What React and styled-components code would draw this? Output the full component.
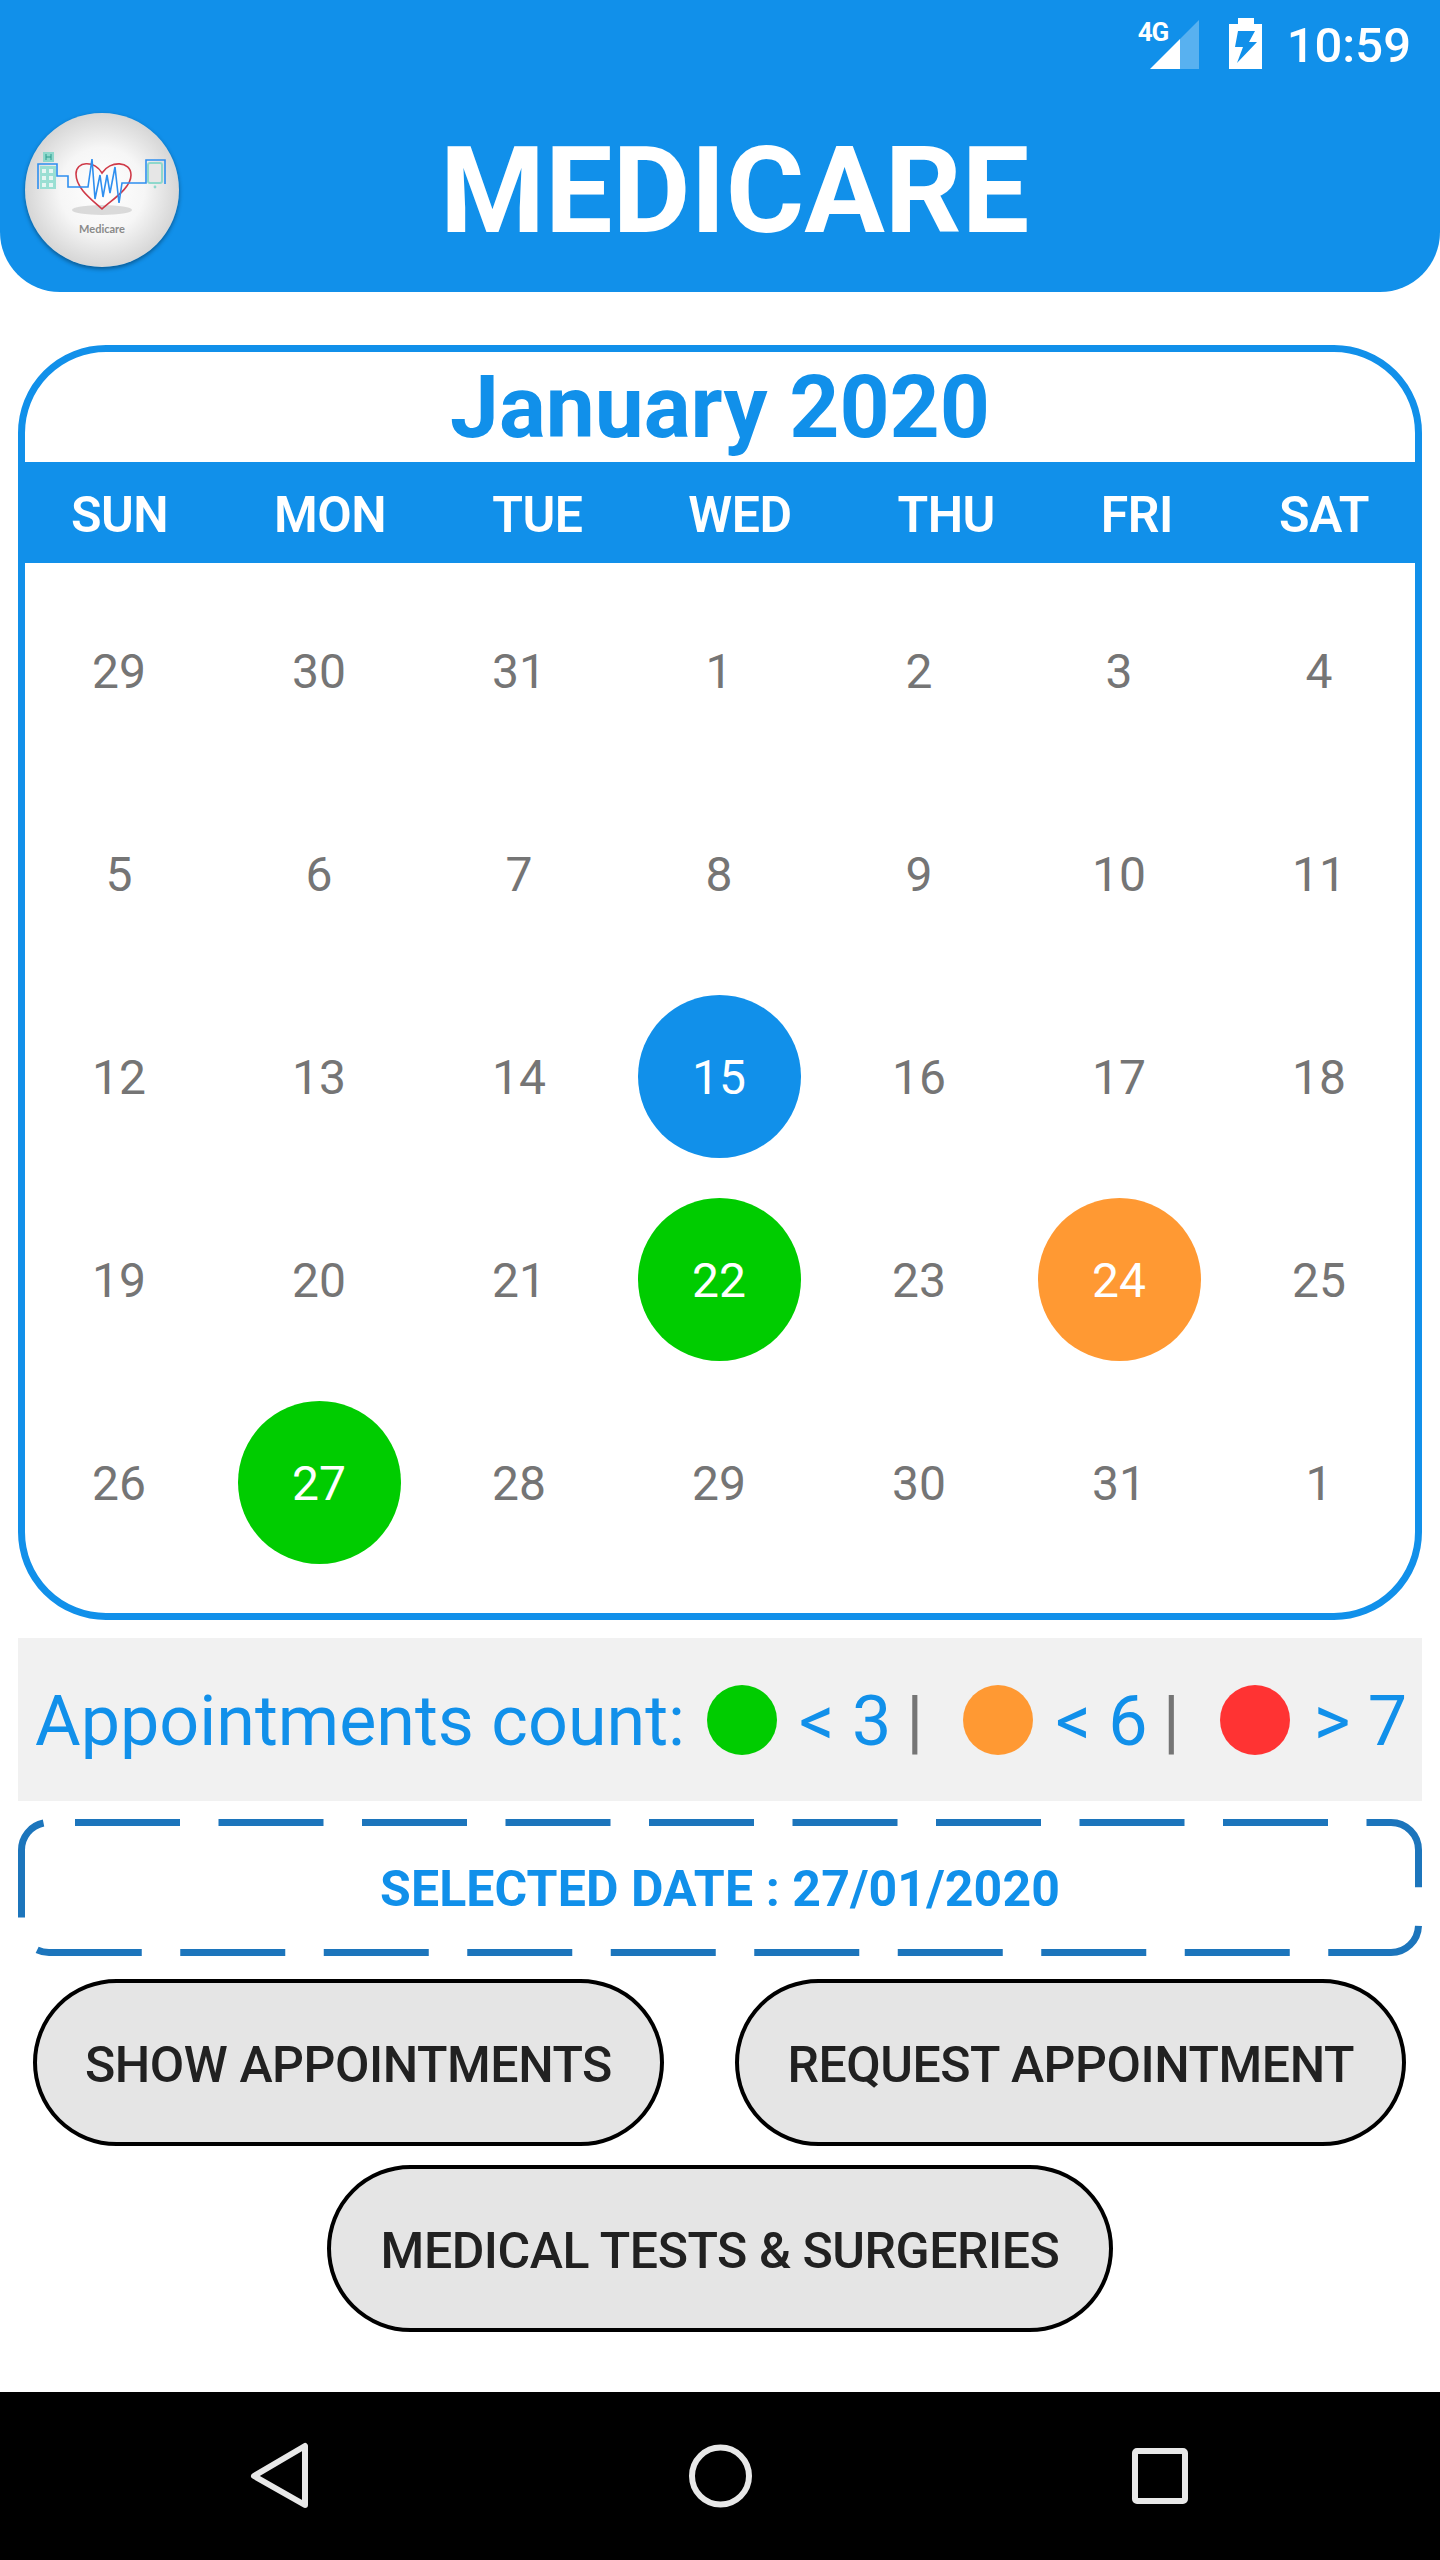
import React from 'react'
import styled, { createGlobalStyle } from 'styled-components'

const weekdays = ['SUN', 'MON', 'TUE', 'WED', 'THU', 'FRI', 'SAT']

const days = [
  29, 30, 31, 1, 2, 3, 4,
  5, 6, 7, 8, 9, 10, 11,
  12, 13, 14, { n: 15, mark: '#1190ea' }, 16, 17, 18,
  19, 20, 21, { n: 22, mark: '#00cc00' }, 23, { n: 24, mark: '#ff9933' }, 25,
  26, { n: 27, mark: '#00cc00' }, 28, 29, 30, 31, 1,
]

const Logo = () => (
  <LogoBadge>
    <svg width="154" height="154" viewBox="0 0 154 154">
      <defs>
        <radialGradient id="ball" cx="50%" cy="50%" r="50%">
          <stop offset="0%" stopColor="#ffffff" />
          <stop offset="55%" stopColor="#f6f6f6" />
          <stop offset="100%" stopColor="#d6d6d6" />
        </radialGradient>
      </defs>
      <circle cx="77" cy="77" r="77" fill="url(#ball)" />
      <ellipse cx="77" cy="97" rx="30" ry="5" fill="#c4c4c4" opacity="0.6" />
      <rect x="18" y="39" width="11" height="10" fill="#8fd8cc" />
      <path d="M21 41v6M26 41v6M21 44h5" stroke="#2a9c8c" strokeWidth="1" fill="none" />
      <rect x="15" y="53" width="16" height="23" fill="#9adfd3" />
      <path d="M17 56h4v4h-4zM24 56h4v4h-4zM17 63h4v4h-4zM24 63h4v4h-4zM17 70h4v4h-4zM24 70h4v4h-4z" fill="#e6f6f3" />
      <path
        d="M77 96C66 86 51 75 51 61C51 48 69 47 77 60C85 47 106 48 106 62C106 75 88 86 77 96Z"
        fill="none"
        stroke="#cf3a48"
        strokeWidth="1.6"
      />
      <rect x="123" y="50" width="14" height="20" rx="2" fill="#e6e6e6" stroke="#8fd8cc" strokeWidth="2" />
      <circle cx="130" cy="74" r="1.4" fill="#8fd8cc" />
      <path
        d="M13 76V51H32V63H43V74H63L67 46L70 86L75 62L78 84L82 62L85 80L90 54L94 90L97 70H121V47H140V71"
        fill="none"
        stroke="#2f8fef"
        strokeWidth="1.6"
      />
      <LogoCaption x="77" y="120" textAnchor="middle">Medicare</LogoCaption>
    </svg>
  </LogoBadge>
)

const StatusIcons = () => (
  <>
    <NetworkIcon>
      <NetworkLabel>4G</NetworkLabel>
      <svg width="50" height="50" viewBox="0 0 50 50">
        <path d="M0 50L30 20V50Z" fill="#fff" />
        <path d="M30 20L49 1V50H30Z" fill="#fff" opacity="0.3" />
      </svg>
    </NetworkIcon>
    <svg width="33" height="52" viewBox="0 0 33 52">
      <path
        d="M9 0H25V6H33V51H0V6H9ZM9 13H26L20 24H28L8 45L14 29H6Z"
        fill="#fff"
        fillRule="evenodd"
      />
    </svg>
  </>
)

const SelectedFrame = () => (
  <DashFrame viewBox="0 0 1404 137">
    <path
      d="M57 3.5H1373A27.5 27.5 0 0 1 1400.500 31V106A27.500 27.500 0 0 1 1373 133.500H31A27.500 27.500 0 0 1 3.500 106V31A27.500 27.500 0 0 1 31 3.500Z"
      fill="none"
      stroke="#1c75bc"
      strokeWidth="7"
      strokeDasharray="105 38.500"
    />
  </DashFrame>
)

const App = () => {
  return (
    <Page>
      <GlobalStyle />
      <Header>
        <StatusBar>
          <StatusIcons />
          <Clock>10:59</Clock>
        </StatusBar>
        <TitleRow>
          <Logo />
          <Title>MEDICARE</Title>
        </TitleRow>
      </Header>

      <Calendar>
        <Month>January 2020</Month>
        <WeekBar>
          {weekdays.map((d) => (
            <WeekDay key={d}>{d}</WeekDay>
          ))}
        </WeekBar>
        <DayGrid>
          {days.map((d, i) => {
            const n = typeof d === 'object' ? d.n : d
            const mark = typeof d === 'object' ? d.mark : null
            return (
              <DayCell key={i}>
                <DayNumber $mark={mark}>{n}</DayNumber>
              </DayCell>
            )
          })}
        </DayGrid>
      </Calendar>

      <Legend>
        <LegendTitle>Appointments count:</LegendTitle>
        <Dot $color="#00cc00" $left={22} />
        <Count $left={22}>&lt; 3</Count>
        <Pipe $left={15}>|</Pipe>
        <Dot $color="#ff9933" $left={40} />
        <Count $left={22}>&lt; 6</Count>
        <Pipe $left={15}>|</Pipe>
        <Dot $color="#ff3333" $left={40} />
        <Count $left={24}>&gt; 7</Count>
      </Legend>

      <SelectedDate>
        <SelectedFrame />
        SELECTED DATE : 27/01/2020
      </SelectedDate>

      <Actions>
        <ActionRow>
          <ActionButton $pad={48}>SHOW APPOINTMENTS</ActionButton>
          <ActionButton $pad={48}>REQUEST APPOINTMENT</ActionButton>
        </ActionRow>
        <ActionRow $center>
          <ActionButton $pad={50}>MEDICAL TESTS &amp; SURGERIES</ActionButton>
        </ActionRow>
      </Actions>

      <NavBar>
        <svg width="80" height="80" viewBox="0 0 80 80">
          <path d="M65 10V69L14 40Z" fill="none" stroke="#e8e8e8" strokeWidth="6" strokeLinejoin="round" />
        </svg>
        <svg width="80" height="80" viewBox="0 0 80 80">
          <circle cx="40.500" cy="40" r="28.500" fill="none" stroke="#e8e8e8" strokeWidth="6" />
        </svg>
        <svg width="80" height="80" viewBox="0 0 80 80">
          <rect x="15" y="15" width="50" height="50" rx="2" fill="none" stroke="#e8e8e8" strokeWidth="6" />
        </svg>
      </NavBar>
    </Page>
  )
}

export default App

const GlobalStyle = createGlobalStyle`
    body {
        margin: 0;
        background: #fff;
        font-family: Roboto, "Liberation Sans", sans-serif;
    }
`

const Page = styled.div`
    width: 1440px;
    height: 2560px;
    display: flex;
    flex-direction: column;
    overflow: hidden;
    background: #fff;
`

const Header = styled.header`
    height: 292px;
    flex: none;
    background: #1190ea;
    border-radius: 0 0 60px 60px;
`

const StatusBar = styled.div`
    height: 88px;
    display: flex;
    align-items: center;
    justify-content: flex-end;
    padding: 0 29px 0 0;
    gap: 25px;
    color: #fff;
`

const NetworkIcon = styled.div`
    position: relative;
    width: 50px;
    height: 50px;
    margin-right: 4px;
`

const NetworkLabel = styled.span`
    position: absolute;
    left: -12px;
    top: 0;
    font-size: 26px;
    line-height: 26px;
    font-weight: 700;
    letter-spacing: -1px;
`

const Clock = styled.span`
    font-size: 49px;
    font-weight: 500;
    line-height: 1;
    padding-top: 2px;
`

const TitleRow = styled.div`
    display: flex;
    align-items: center;
    padding: 25px 0 0 25px;
`

const LogoBadge = styled.div`
    width: 154px;
    height: 154px;
    flex: none;
    border-radius: 50%;
    box-shadow: 0 2px 4px rgba(0, 0, 0, 0.4);
    line-height: 0;
`

const LogoCaption = styled.text`
    font-family: Lato, sans-serif;
    font-size: 11px;
    font-weight: 700;
    fill: #8a8a8a;
`

const Title = styled.h1`
    margin: 2px 0 0 261px;
    color: #fff;
    font-size: 120px;
    font-weight: 700;
    line-height: 1;
`

const Calendar = styled.section`
    margin: 53px 18px 0;
    height: 1275px;
    box-sizing: border-box;
    border: 7px solid #1190ea;
    border-radius: 88px;
    flex: none;
`

const Month = styled.h2`
    margin: 0;
    height: 110px;
    display: flex;
    align-items: center;
    justify-content: center;
    color: #1190ea;
    font-size: 87.500px;
    font-weight: 700;
`

const WeekBar = styled.div`
    height: 101px;
    margin: 0 -7px;
    padding-top: 5px;
    box-sizing: border-box;
    display: flex;
    align-items: center;
    justify-content: space-around;
    background: #1190ea;
`

const WeekDay = styled.span`
    color: #fff;
    font-size: 50px;
    font-weight: 600;
    letter-spacing: -0.5px;
`

const DayGrid = styled.div`
    margin: 6px -4px 0 -6px;
    display: grid;
    grid-template-columns: repeat(7, 1fr);
    grid-auto-rows: 203px;
`

const DayCell = styled.div`
    display: flex;
    align-items: center;
    justify-content: center;
`

const DayNumber = styled.span`
    width: 163px;
    height: 163px;
    padding-top: 2px;
    box-sizing: border-box;
    display: flex;
    align-items: center;
    justify-content: center;
    border-radius: 50%;
    font-size: 48px;
    color: ${(p) => (p.$mark ? '#fff' : '#757575')};
    background: ${(p) => p.$mark || 'transparent'};
`

const Legend = styled.div`
    margin: 18px 18px 0;
    height: 163px;
    flex: none;
    display: flex;
    align-items: center;
    padding-left: 17px;
    background: #f1f1f1;
    color: #1190ea;
    font-size: 70px;
`

const LegendTitle = styled.span`
    white-space: nowrap;
    padding-top: 3px;
`

const Dot = styled.span`
    width: 70px;
    height: 70px;
    flex: none;
    border-radius: 50%;
    margin-left: ${(p) => p.$left}px;
    background: ${(p) => p.$color};
`

const Count = styled.span`
    margin-left: ${(p) => p.$left}px;
    white-space: nowrap;
    padding-top: 3px;
`

const Pipe = styled.span`
    margin-left: ${(p) => p.$left}px;
    color: #757575;
    padding-top: 3px;
`

const SelectedDate = styled.div`
    position: relative;
    margin: 18px 18px 0;
    height: 137px;
    box-sizing: border-box;
    padding-top: 3px;
    flex: none;
    display: flex;
    align-items: center;
    justify-content: center;
    color: #1190ea;
    font-size: 50px;
    font-weight: 700;
    letter-spacing: 0.1px;
`

const DashFrame = styled.svg`
    position: absolute;
    inset: 0;
    width: 100%;
    height: 100%;
`

const Actions = styled.div`
    margin-top: 23px;
    display: flex;
    flex-direction: column;
    gap: 19px;
`

const ActionRow = styled.div`
    display: flex;
    justify-content: ${(p) => (p.$center ? 'center' : 'space-between')};
    padding: ${(p) => (p.$center ? '0' : '0 34px 0 33px')};
`

const ActionButton = styled.button`
    height: 167px;
    padding: 4px ${(p) => p.$pad}px 0;
    box-sizing: border-box;
    border: 4px solid #000;
    border-radius: 84px;
    background: #e5e5e5;
    color: #212121;
    font-family: inherit;
    font-size: 50px;
    font-weight: 500;
    letter-spacing: -0.45px;
    white-space: nowrap;
`

const NavBar = styled.nav`
    margin-top: auto;
    height: 168px;
    flex: none;
    display: flex;
    align-items: center;
    gap: 360px;
    padding-left: 240px;
    background: #000;
`
